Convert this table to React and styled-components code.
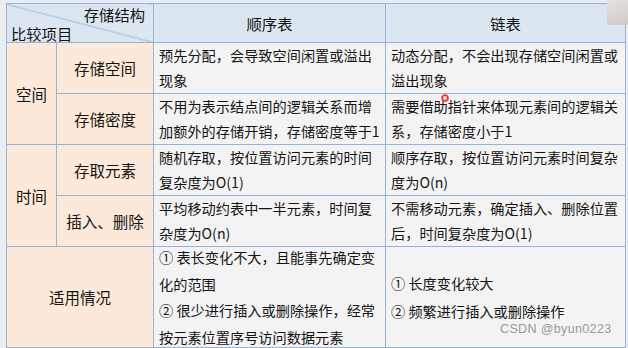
import React from 'react';
import styled, { createGlobalStyle } from 'styled-components';

const GlobalStyle = createGlobalStyle`
  html, body {
    margin: 0;
    padding: 0;
    background: #eaeef3;
  }
  body {
    font-family: "Noto Sans CJK SC", "Noto Sans", sans-serif;
    color: #141414;
  }
`;

const Screen = styled.div`
  position: relative;
  width: 628px;
  height: 348px;
  overflow: hidden;
  padding: 3px 0 0 6px;
  box-sizing: border-box;
`;

const Table = styled.table`
  border-collapse: collapse;
  table-layout: fixed;
  width: 619px;
  font-size: 14.2px;
`;

const Row = styled.tr`
  height: ${(p) => p.$h}px;
`;

const Cell = styled.td`
  border: 1px solid #95b3d7;
  padding: 0;
  vertical-align: middle;
  overflow: hidden;
`;

const DiagCell = styled(Cell)`
  background-color: #dce6f1;
  background-image: linear-gradient(
    to top right,
    transparent calc(50% - 0.7px),
    #8eaad0 50%,
    transparent calc(50% + 0.7px)
  );
`;

const DiagInner = styled.div`
  height: 38px;
  display: flex;
  flex-direction: column;
  justify-content: space-between;
  padding: 1px 8px 0 4px;
  box-sizing: border-box;
  font-size: 15.3px;
  line-height: 18px;
`;

const DiagTop = styled.span`
  align-self: flex-end;
`;

const HeadCell = styled(Cell)`
  background: #dce6f1;
  text-align: center;
  font-size: 15.3px;
`;

const GroupCell = styled(Cell)`
  background: #fde9d9;
  text-align: center;
  font-size: 15.5px;
`;

const TextCell = styled(Cell)`
  background: #f3f3f3;
  padding: 0 0 0 5px;
  line-height: ${(p) => p.$lh || 25}px;
  white-space: nowrap;
`;

const Para = styled.div`
  margin: ${(p) => p.$gap || 0}px 0;
`;

const Stack = styled.div`
  height: 100px;
  display: flex;
  flex-direction: column;
  justify-content: space-between;
  line-height: 20px;
`;

const Pointer = styled.div`
  position: absolute;
  left: 441px;
  top: 94px;
  width: 8px;
  height: 8px;
  border-radius: 50%;
  background: radial-gradient(circle, #ffd6d6 0 25%, #f02a2a 45%, rgba(240, 42, 42, 0.5) 75%, transparent 100%);
`;

const Corner = styled.div`
  position: absolute;
  right: 0;
  top: 0;
  width: 21px;
  height: 25px;
  background: linear-gradient(160deg, #e6e2de, #cfc9c4);
  border-bottom-left-radius: 3px;
  filter: blur(0.6px);
`;

const Watermark = styled.div`
  position: absolute;
  left: 500px;
  top: 322px;
  font-family: "Liberation Sans", Arial, sans-serif;
  font-size: 12.6px;
  letter-spacing: 0.3px;
  color: #9a9a9a;
`;

const Lines = ({ lines, gap }) =>
  lines.map((l, i) => (
    <Para key={i} $gap={gap}>
      {l}
    </Para>
  ));

const App = () => (
  <Screen>
    <GlobalStyle />
    <Table>
      <colgroup>
        <col style={{ width: 50 }} />
        <col style={{ width: 97 }} />
        <col style={{ width: 232 }} />
        <col style={{ width: 240 }} />
      </colgroup>
      <tbody>
        <Row $h={39}>
          <DiagCell colSpan={2}>
            <DiagInner>
              <DiagTop>存储结构</DiagTop>
              <span>比较项目</span>
            </DiagInner>
          </DiagCell>
          <HeadCell>顺序表</HeadCell>
          <HeadCell>链表</HeadCell>
        </Row>
        <Row $h={51}>
          <GroupCell rowSpan={2}>空间</GroupCell>
          <GroupCell>存储空间</GroupCell>
          <TextCell>
            <Lines lines={['预先分配，会导致空间闲置或溢出', '现象']} />
          </TextCell>
          <TextCell>
            <Lines lines={['动态分配，不会出现存储空间闲置或', '溢出现象']} />
          </TextCell>
        </Row>
        <Row $h={51}>
          <GroupCell>存储密度</GroupCell>
          <TextCell>
            <Lines lines={['不用为表示结点间的逻辑关系而增', '加额外的存储开销，存储密度等于1']} />
          </TextCell>
          <TextCell>
            <Lines lines={['需要借助指针来体现元素间的逻辑关', '系，存储密度小于1']} />
          </TextCell>
        </Row>
        <Row $h={50}>
          <GroupCell rowSpan={2}>时间</GroupCell>
          <GroupCell>存取元素</GroupCell>
          <TextCell>
            <Lines lines={['随机存取，按位置访问元素的时间', '复杂度为O(1)']} />
          </TextCell>
          <TextCell>
            <Lines lines={['顺序存取，按位置访问元素时间复杂', '度为O(n)']} />
          </TextCell>
        </Row>
        <Row $h={51}>
          <GroupCell>插入、删除</GroupCell>
          <TextCell>
            <Lines lines={['平均移动约表中一半元素，时间复', '杂度为O(n)']} />
          </TextCell>
          <TextCell>
            <Lines lines={['不需移动元素，确定插入、删除位置', '后，时间复杂度为O(1)']} />
          </TextCell>
        </Row>
        <Row $h={101}>
          <GroupCell colSpan={2}>适用情况</GroupCell>
          <TextCell>
            <Stack>
              <Lines
                lines={[
                  '① 表长变化不大，且能事先确定变',
                  '化的范围',
                  '② 很少进行插入或删除操作，经常',
                  '按元素位置序号访问数据元素',
                ]}
              />
            </Stack>
          </TextCell>
          <TextCell $lh={27}>
            <Lines lines={['① 长度变化较大', '② 频繁进行插入或删除操作']} gap={1} />
          </TextCell>
        </Row>
      </tbody>
    </Table>
    <Pointer />
    <Corner />
    <Watermark>CSDN @byun0223</Watermark>
  </Screen>
);

export default App;
